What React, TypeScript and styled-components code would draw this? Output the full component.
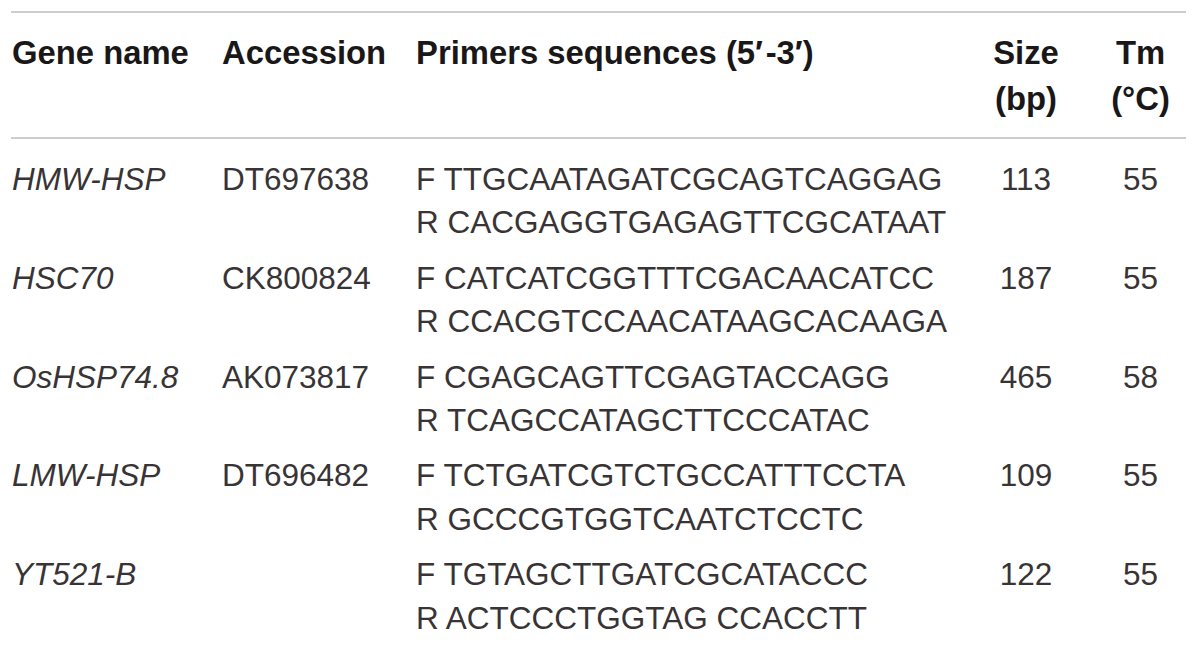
import React from "react";
import styled, { createGlobalStyle } from "styled-components";

const GlobalStyle = createGlobalStyle`
  html, body {
    margin: 0;
    padding: 0;
    background: #ffffff;
  }
  body {
    font-family: "Liberation Sans", Arial, Helvetica, sans-serif;
    color: #231f20;
  }
`;

const Page = styled.div`
  padding: 11px 0 0 11px;
`;

const Table = styled.div`
  width: 1175px;
  border-top: 2px solid #cdcdcd;
`;

const columns = "210px 194px 540px 140px 89px";

const HeadRow = styled.div`
  display: grid;
  grid-template-columns: ${columns};
  padding: 17px 0 15px 1px;
  border-bottom: 2px solid #cdcdcd;
`;

const HeadCell = styled.div<{ $center?: boolean }>`
  font-family: "Liberation Sans", Arial, Helvetica, sans-serif;
  font-weight: 700;
  font-size: 32.8px;
  line-height: 46px;
  color: #1a1718;
  white-space: nowrap;
  text-align: ${(p) => (p.$center ? "center" : "left")};
`;

const Body = styled.div`
  padding-top: 7px;
`;

const Row = styled.div`
  display: grid;
  grid-template-columns: ${columns};
  padding: 12px 0 0 1px;
`;

const Cell = styled.div<{ $center?: boolean; $italic?: boolean }>`
  font-family: "Liberation Sans", Arial, Helvetica, sans-serif;
  font-weight: 400;
  font-size: 31.5px;
  line-height: 43.4px;
  color: #383435;
  white-space: pre;
  font-style: ${(p) => (p.$italic ? "italic" : "normal")};
  text-align: ${(p) => (p.$center ? "center" : "left")};
`;

const Line = styled.div``;

type Primer = {
  gene: string;
  acc: string;
  f: string;
  r: string;
  size: string;
  tm: string;
};

const rows: Primer[] = [
  { gene: "HMW-HSP", acc: "DT697638", f: "TTGCAATAGATCGCAGTCAGGAG", r: "CACGAGGTGAGAGTTCGCATAAT", size: "113", tm: "55" },
  { gene: "HSC70", acc: "CK800824", f: "CATCATCGGTTTCGACAACATCC", r: "CCACGTCCAACATAAGCACAAGA", size: "187", tm: "55" },
  { gene: "OsHSP74.8", acc: "AK073817", f: "CGAGCAGTTCGAGTACCAGG", r: "TCAGCCATAGCTTCCCATAC", size: "465", tm: "58" },
  { gene: "LMW-HSP", acc: "DT696482", f: "TCTGATCGTCTGCCATTTCCTA", r: "GCCCGTGGTCAATCTCCTC", size: "109", tm: "55" },
  { gene: "YT521-B", acc: "", f: "TGTAGCTTGATCGCATACCC", r: "ACTCCCTGGTAG CCACCTT", size: "122", tm: "55" },
];

export default function App() {
  return (
    <>
      <GlobalStyle />
      <Page>
        <Table>
          <HeadRow>
            <HeadCell>Gene name</HeadCell>
            <HeadCell>Accession</HeadCell>
            <HeadCell>Primers sequences (5′{"\u200A"}-3′)</HeadCell>
            <HeadCell $center>
              <Line>Size</Line>
              <Line>(bp)</Line>
            </HeadCell>
            <HeadCell $center>
              <Line>Tm</Line>
              <Line>(°C)</Line>
            </HeadCell>
          </HeadRow>
          <Body>
            {rows.map((r) => (
              <Row key={r.gene}>
                <Cell $italic>{r.gene}</Cell>
                <Cell>{r.acc}</Cell>
                <Cell>
                  <Line>F {r.f}</Line>
                  <Line>R {r.r}</Line>
                </Cell>
                <Cell $center>{r.size}</Cell>
                <Cell $center>{r.tm}</Cell>
              </Row>
            ))}
          </Body>
        </Table>
      </Page>
    </>
  );
}
